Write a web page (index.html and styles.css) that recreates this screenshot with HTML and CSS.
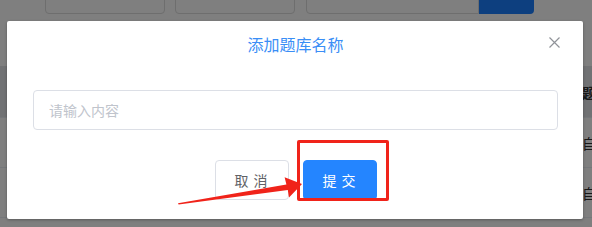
FILE: index.html
```html
<!DOCTYPE html>
<html lang="zh-CN">
<head>
    <meta charset="UTF-8">
    <title>添加题库名称</title>
    <link rel="stylesheet" href="styles.css">
</head>
<body>
    <div class="page">
        <div class="toolbar">
            <button class="tool-btn">导入题库</button>
            <button class="tool-btn">新增题库</button>
            <div class="search">
                <input class="search-input" placeholder="请输入题库名称">
                <button class="search-btn">搜索</button>
            </div>
        </div>
        <div class="table">
            <div class="row head"><span class="cell">题库名称</span></div>
            <div class="row"><span class="cell">自定义题库</span></div>
            <div class="row"><span class="cell">自定义题库</span></div>
        </div>
    </div>

    <div class="mask"></div>

    <div class="dialog">
        <div class="dialog-header">
            <span class="dialog-title">添加题库名称</span>
            <button class="dialog-close" aria-label="关闭">
                <svg width="11" height="11" viewBox="0 0 11 11">
                    <path d="M0.5 0.5 L10.5 10.5 M10.5 0.5 L0.5 10.5" stroke="#909399" stroke-width="1.2" fill="none"/>
                </svg>
            </button>
        </div>
        <div class="dialog-body">
            <input class="name-input" type="text" placeholder="请输入内容">
        </div>
        <div class="dialog-footer">
            <button class="btn">取 消</button>
            <button class="btn btn-primary">提 交</button>
        </div>
    </div>

    <!-- annotation drawn over the screenshot -->
    <div class="mark-box"></div>
    <svg class="mark-arrow" width="592" height="227" viewBox="0 0 592 227">
        <polygon fill="#f0231a" points="178,203.2 178.6,204.4 287.8,190 289,197.5 302,184 284.6,177.2 286.4,184.6"/>
    </svg>
</body>
</html>
```

FILE: styles.css
```css
body {
    margin: 0;
    width: 592px;
    height: 227px;
    overflow: hidden;
    font-family: "Noto Sans CJK SC", "Noto Sans", sans-serif;
    background: #fff;
    position: relative;
}
button {
    font-family: inherit;
}
.page {
    padding-left: 45px;
}
.toolbar {
    display: flex;
    align-items: center;
    margin-top: -26px;
    height: 40px;
}
.tool-btn {
    width: 120px;
    height: 40px;
    margin-right: 10px;
    padding: 0 0 11px;
    background: #fff;
    border: 1px solid #dcdcdc;
    border-radius: 4px;
    font-size: 14px;
    font-weight: bold;
    color: #333;
}
.search {
    display: flex;
    margin-left: 1px;
}
.search-input {
    width: 173px;
    height: 40px;
    box-sizing: border-box;
    border: 1px solid #dcdcdc;
    border-radius: 4px 0 0 4px;
    padding: 0 15px 11px;
    font-family: inherit;
    font-size: 14px;
}
.search-btn {
    width: 55px;
    height: 40px;
    padding: 0 0 11px;
    border: none;
    border-radius: 0 4px 4px 0;
    background: #1a7eff;
    color: #fff;
    font-size: 14px;
}
.table {
    margin-top: 52px;
    margin-left: -45px;
}
.row {
    height: 50px;
    border-bottom: 1px solid #ebeef5;
    box-sizing: border-box;
    display: flex;
    align-items: center;
    padding-left: 582px;
    font-size: 14px;
    color: #303133;
    white-space: nowrap;
}
.row.head {
    height: 52px;
    background: #e2e4e9;
    font-weight: bold;
}
.mask {
    position: absolute;
    inset: 0;
    background: rgba(0, 0, 0, 0.5);
}
.dialog {
    position: absolute;
    left: 7px;
    top: 21px;
    width: 576px;
    height: 198px;
    box-sizing: border-box;
    background: #fff;
    border-radius: 2px;
    box-shadow: 0 1px 3px rgba(0, 0, 0, 0.3);
    padding: 11px 25px 19px 26px;
}
.dialog-header {
    position: relative;
    text-align: center;
    height: 24px;
    line-height: 24px;
}
.dialog-title {
    font-size: 16px;
    color: #3a8ef6;
}
.dialog-close {
    position: absolute;
    right: -2px;
    top: 5px;
    padding: 0;
    border: none;
    background: none;
    width: 11px;
    height: 11px;
    display: flex;
}
.dialog-body {
    padding-top: 34px;
}
.name-input {
    display: block;
    width: 100%;
    height: 40px;
    box-sizing: border-box;
    border: 1px solid #dcdfe6;
    border-radius: 4px;
    padding: 0 15px;
    font-family: inherit;
    font-size: 14px;
    color: #606266;
}
.name-input::placeholder {
    color: #c0c4cc;
}
.dialog-footer {
    display: flex;
    justify-content: center;
    gap: 14px;
    padding-top: 30px;
}
.btn {
    width: 74px;
    height: 40px;
    border: 1px solid #dcdfe6;
    border-radius: 4px;
    background: #fff;
    color: #606266;
    font-size: 14px;
    letter-spacing: 1px;
}
.btn-primary {
    background: #2485ff;
    border-color: #2485ff;
    color: #fff;
}
.mark-box {
    position: absolute;
    left: 297px;
    top: 140px;
    width: 86px;
    height: 55px;
    border: 3px solid #f0231a;
    border-radius: 2px;
}
.mark-arrow {
    position: absolute;
    left: 0;
    top: 0;
}
```
